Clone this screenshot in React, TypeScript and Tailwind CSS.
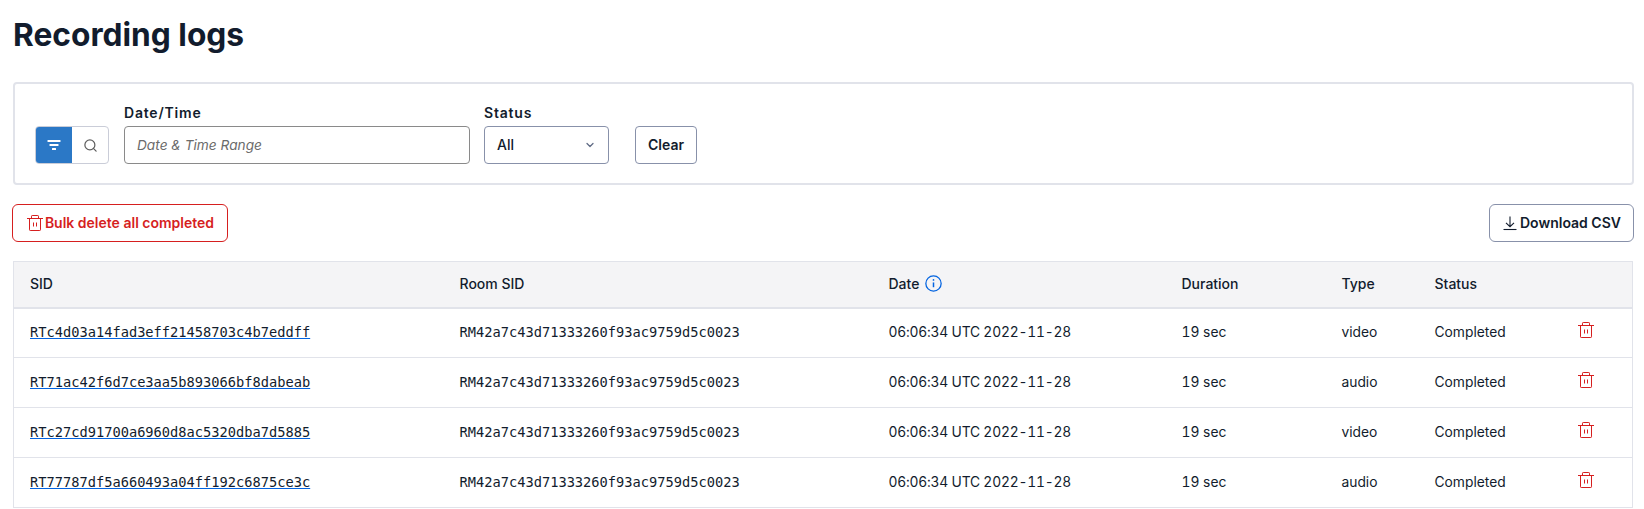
import { ChevronDown, Search } from "lucide-react";

const rows = [
  { sid: "RTc4d03a14fad3eff21458703c4b7eddff", type: "video" },
  { sid: "RT71ac42f6d7ce3aa5b893066bf8dabeab", type: "audio" },
  { sid: "RTc27cd91700a6960d8ac5320dba7d5885", type: "video" },
  { sid: "RT77787df5a660493a04ff192c6875ce3c", type: "audio" },
];

const roomSid = "RM42a7c43d71333260f93ac9759d5c0023";

function TrashIcon({ className }: { className?: string }) {
  return (
    <svg viewBox="0 0 16 16" fill="none" stroke="currentColor" strokeWidth="1" className={className}>
      <path d="M0 3.5h16" />
      <path d="M4.500 3.500V1.200q0-.7.7-.7h5.600q.7 0 .7.7v2.300" />
      <path d="M2.500 3.500v11.300q0 .7.7.7h9.600q.7 0 .7-.7V3.500" />
      <path d="M6.500 7.500v4M9.500 7.500v4" />
    </svg>
  );
}

function FilterIcon() {
  return (
    <svg viewBox="0 0 16 16" fill="currentColor" className="h-4 w-4">
      <rect x="1.500" y="3" width="13" height="2" rx="0.500" />
      <rect x="3.500" y="7" width="9" height="2" rx="0.500" />
      <rect x="6" y="11" width="4" height="2" rx="0.500" />
    </svg>
  );
}

function DownloadIcon() {
  return (
    <svg viewBox="0 0 16 16" fill="none" stroke="currentColor" strokeWidth="1.100" className="h-4 w-4">
      <path d="M8 1.500v10M4 7.800l4 3.900 4-3.900" />
      <path d="M1.500 14.500h13" />
    </svg>
  );
}

function InfoIcon() {
  return (
    <svg viewBox="0 0 16 16" fill="none" stroke="currentColor" strokeWidth="1.200" className="h-[17px] w-[17px] text-[#0263e0]">
      <circle cx="8" cy="8" r="7.200" />
      <path d="M8 7v4.500" strokeWidth="1.400" />
      <circle cx="8" cy="4.600" r="0.800" fill="currentColor" stroke="none" />
    </svg>
  );
}

export default function App() {
  return (
    <div className="min-h-screen overflow-hidden bg-white pl-3 pr-[10px] font-['Inter',sans-serif] text-sm text-[#121c2d]">
      <h1 className="pt-[15px] pl-px text-[31.7px] leading-10 font-bold">Recording logs</h1>

      <section className="mt-[27px] ml-[1px] flex h-[103px] items-end gap-[16px] rounded border-2 border-[#e1e3ea] pr-4 pb-[19px] pl-[20px]">
        <div className="flex h-[38px] w-[74px] overflow-hidden rounded border border-[#cacdd8]">
          <div className="-my-px -ml-px flex w-[37px] items-center justify-center bg-[#2b78c6] text-white">
            <FilterIcon />
          </div>
          <div className="flex flex-1 items-center justify-center text-[#5f5f5f]">
            <Search size={15} strokeWidth={2} />
          </div>
        </div>

        <label className="-ml-px block w-[346px]">
          <span className="mb-[3px] block leading-[20px] font-semibold tracking-[0.8px]">Date/Time</span>
          <input
            placeholder="Date & Time Range"
            className="h-[38px] w-full rounded border border-[#8a8a8a] px-3 text-[13.7px] italic outline-none placeholder:text-[#6b6b6b]"
          />
        </label>

        <label className="-ml-0.5 block w-[125px]">
          <span className="mb-[3px] block leading-[20px] font-semibold tracking-[0.8px]">Status</span>
          <div className="flex h-[38px] items-center justify-between rounded border border-[#8891aa] pr-3 pl-3 font-medium">
            All
            <ChevronDown size={12} className="text-[#606b85]" strokeWidth={2.500} />
          </div>
        </label>

        <button className="ml-[10px] h-[38px] w-[62px] rounded border border-[#8891aa] font-semibold">Clear</button>
      </section>

      <div className="mt-[19px] flex items-center justify-between">
        <button className="flex h-[38px] w-[216px] items-center justify-center gap-[2px] rounded-md border border-[#d61f1f] pl-px font-semibold text-[#d61f1f]">
          <TrashIcon className="h-4 w-4" />
          Bulk delete all completed
        </button>
        <button className="flex h-[38px] w-[145px] items-center justify-center gap-[2px] rounded-md border border-[#8891aa] font-semibold">
          <DownloadIcon />
          Download CSV
        </button>
      </div>

      <table className="mt-[19px] ml-[1px] w-[1620px] table-fixed border-collapse border border-[#e1e3ea]">
        <colgroup>
          <col className="w-[430px]" />
          <col className="w-[429px]" />
          <col className="w-[293px]" />
          <col className="w-[160px]" />
          <col className="w-[93px]" />
          <col className="w-[136px]" />
          <col />
        </colgroup>
        <thead className="bg-[#f4f4f6] text-left">
          <tr className="h-[46px] border-b-2 border-[#e1e3ea]">
            <th className="px-4 pb-px font-medium">SID</th>
            <th className="px-4 pb-px font-medium">Room SID</th>
            <th className="px-4 pb-px font-medium">
              <span className="flex items-center gap-[6px]">
                Date
                <InfoIcon />
              </span>
            </th>
            <th className="px-4 pb-px font-medium">Duration</th>
            <th className="px-4 pb-px font-medium">Type</th>
            <th className="px-4 pb-px font-medium">Status</th>
            <th />
          </tr>
        </thead>
        <tbody>
          {rows.map((row) => (
            <tr key={row.sid} className="h-[50px] border-b border-[#e1e3ea]">
              <td className="px-4">
                <a className="font-['DejaVu_Sans_Mono',monospace] text-[13.7px] text-[#121c2d] underline decoration-[#0263e0]">
                  {row.sid}
                </a>
              </td>
              <td className="px-4 font-['DejaVu_Sans_Mono',monospace] text-[13.7px]">{roomSid}</td>
              <td className="px-4 text-[13.8px] tracking-[-0.19px] tabular-nums">06:06:34 UTC 2022-11-28</td>
              <td className="px-4 text-[13.8px] tabular-nums">19 sec</td>
              <td className="px-4 text-[13.8px]">{row.type}</td>
              <td className="px-4 text-[13.8px]">Completed</td>
              <td>
                <TrashIcon className="mt-[-6px] ml-[23px] h-4 w-4 text-[#d61f1f]" />
              </td>
            </tr>
          ))}
        </tbody>
      </table>
    </div>
  );
}
